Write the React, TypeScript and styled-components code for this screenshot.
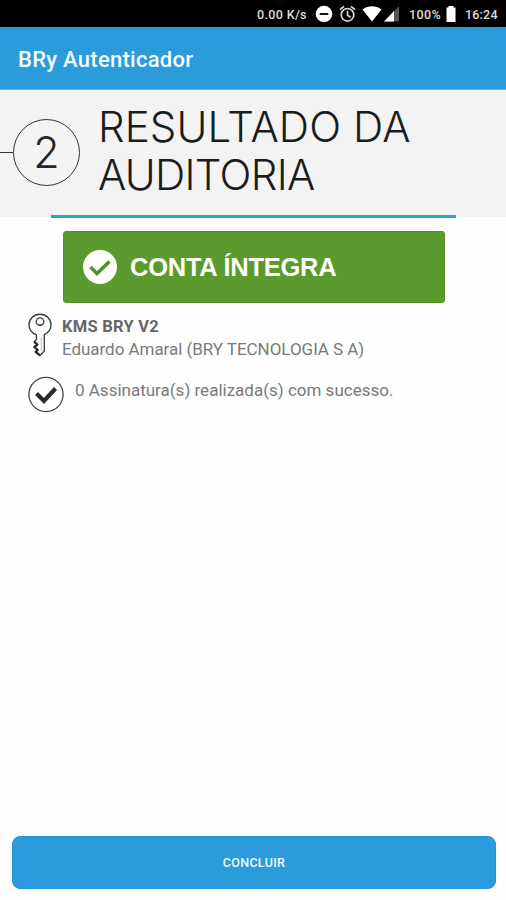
import React from "react";
import styled, { createGlobalStyle } from "styled-components";

const GlobalStyle = createGlobalStyle`
  * { box-sizing: border-box; }
  body { margin: 0; background: #fefefe; font-family: Roboto, "Liberation Sans", sans-serif; }
`;

const Screen = styled.div`
  width: 506px;
  height: 900px;
  display: flex;
  flex-direction: column;
  overflow: hidden;
`;

const StatusBar = styled.header`
  height: 27px;
  flex: none;
  display: flex;
  align-items: center;
  padding: 1px 0 0 257px;
  background: #000;
  color: #dedede;
`;

const StatusText = styled.span<{ $width: number; $spacing?: number }>`
  width: ${(p) => p.$width}px;
  font-size: 12.5px;
  line-height: 15px;
  font-weight: 500;
  letter-spacing: ${(p) => p.$spacing ?? 0}px;
  white-space: nowrap;
`;

const StatusIcons = styled.svg`
  display: block;
  flex: none;
`;

const AppBar = styled.div`
  height: 63px;
  flex: none;
  display: flex;
  align-items: center;
  padding: 2px 0 0 18px;
  background: #2b9bdb;
  border-bottom: 1px solid #76aecb;
`;

const AppTitle = styled.h1`
  margin: 0;
  color: #f2fafd;
  font-size: 22px;
  font-weight: 500;
  letter-spacing: 0.27px;
`;

const StepBanner = styled.section`
  height: 127px;
  flex: none;
  display: flex;
  background: #f3f3f3;
`;

const StepMarker = styled.div`
  width: 98px;
  height: 66px;
  margin-top: 29px;
  display: flex;
  align-items: center;
`;

const StepLine = styled.div`
  width: 13px;
  height: 1px;
  background: #333;
`;

const StepCircle = styled.div`
  width: 67px;
  height: 67px;
  border: 1px solid #333;
  border-radius: 50%;
  text-align: center;
  color: #262626;
  font: 300 43px/65px Inter, sans-serif;
`;

const StepTitle = styled.h2`
  margin: 13px 0 0;
  color: #1c1c1c;
  font: 300 42px/48px Inter, "Liberation Sans", sans-serif;
  white-space: nowrap;
`;

const TitleLine = styled.span<{ $spacing: number }>`
  display: block;
  letter-spacing: ${(p) => p.$spacing}px;
`;

const Divider = styled.div`
  width: 405px;
  height: 3px;
  flex: none;
  margin: -2px 0 0 51px;
  background: #1fa9c8;
`;

const ResultBadge = styled.div`
  width: 382px;
  height: 72px;
  flex: none;
  margin: 13px 0 0 63px;
  padding-left: 19px;
  display: flex;
  align-items: center;
  gap: 13px;
  border: 1px solid #539022;
  border-radius: 3px;
  background: #5a9a2e;
  color: #fdfff9;
  font: bold 25.5px/30px "Liberation Sans", Arial, sans-serif;
  letter-spacing: -0.25px;
`;

const Details = styled.section`
  flex: 1;
  padding: 10px 0 0 28px;
`;

const DetailRow = styled.div<{ $gap: number; $top?: number }>`
  display: flex;
  gap: ${(p) => p.$gap}px;
  margin-top: ${(p) => p.$top ?? 0}px;
`;

const DetailText = styled.p<{ $bold?: boolean; $spacing?: number }>`
  margin: 0;
  font-size: ${(p) => (p.$bold ? 16.5 : 17)}px;
  line-height: 23px;
  font-weight: ${(p) => (p.$bold ? 700 : 400)};
  letter-spacing: ${(p) => p.$spacing ?? 0}px;
  color: ${(p) => (p.$bold ? "#666" : "#7a7a7a")};
  white-space: nowrap;
`;

const DetailLines = styled.div<{ $top: number }>`
  padding-top: ${(p) => p.$top}px;
`;

const FinishButton = styled.button`
  width: 484px;
  height: 53px;
  flex: none;
  margin: 0 0 11px 12px;
  padding: 1px 0 0;
  border: 1px solid #2394d4;
  border-radius: 8px;
  background: #2b9bdb;
  color: #eefaff;
  font: 500 12.5px/16px Roboto, sans-serif;
  letter-spacing: 0.3px;
`;

const BadgeCheck = () => (
  <svg width="34" height="36" viewBox="0 0 34 36">
    <circle cx="17" cy="18" r="17" fill="#fdfff9" />
    <path d="M7.500 18l6.500 6.500L26.500 12.500" fill="none" stroke="#528f29" strokeWidth="3.400" />
  </svg>
);

const KeyIcon = () => (
  <svg width="24" height="44" viewBox="0 0 24 44" fill="none" stroke="#3f3f3f" strokeWidth="1.4" strokeLinejoin="round">
    <path d="M8.3 21.6C3.8 20 1 16.300 1 12 1 5.800 6 1.300 12 1.300S23 5.800 23 12c0 4.300-2.500 7.700-6.700 9.600V38L12 42.500 7.500 38.800l2.200-1.800-3.500-3 3.300-2.600-3.300-2.900 2.300-2.200z" />
    <path d="M6.200 29l3.300 2.600-3.300 2.500 3.600 3-2.200 1.800L12 42.400" stroke="#222" strokeWidth="2" />
    <circle cx="12" cy="8.600" r="3.700" />
    <path d="M13.200 24v14" stroke="#aaa" strokeWidth="0.800" />
  </svg>
);

const CheckIcon = () => (
  <svg width="36" height="37" viewBox="0 0 36 37" fill="none">
    <circle cx="18" cy="18.500" r="17.100" stroke="#444" strokeWidth="1.300" />
    <path d="M8.500 17.500l7.500 7.500L27.500 12.500" stroke="#2b2b2b" strokeWidth="4.200" />
  </svg>
);

const StatusSymbols = () => (
  <StatusIcons width="88" height="20" viewBox="0 0 88 20">
    <circle cx="10" cy="10" r="8.300" fill="#fff" />
    <path d="M5.700 10h8.600" stroke="#111" strokeWidth="2" />
    <g fill="none" stroke="#d6d6d6" strokeWidth="1.700">
      <circle cx="33.500" cy="10.800" r="6.300" />
      <path d="M33.500 6.800v4.400l3 2M26 5.700l4-3.400M41 5.700l-4-3.400" />
    </g>
    <path d="M48.500 5.500c5.500-4.300 13.500-4.300 19 0L58 17.500z" fill="#fff" />
    <path d="M85 2.200v15.300H70z" fill="#555" />
    <path d="M80 7v10.500H70z" fill="#fff" />
  </StatusIcons>
);

const BatteryIcon = () => (
  <StatusIcons width="24" height="18" viewBox="0 0 24 18">
    <path d="M5.500 2.500h2V1h5v1.500h2V17h-9z" fill="#fff" />
  </StatusIcons>
);

export default function App() {
  return (
    <Screen>
      <GlobalStyle />
      <StatusBar>
        <StatusText $width={57} $spacing={0.35}>0.00 K/s</StatusText>
        <StatusSymbols />
        <StatusText $width={7} />
        <StatusText $width={32} $spacing={0.4}>100%</StatusText>
        <BatteryIcon />
        <StatusText $width={34} $spacing={0.2}>16:24</StatusText>
      </StatusBar>
      <AppBar>
        <AppTitle>BRy Autenticador</AppTitle>
      </AppBar>
      <StepBanner>
        <StepMarker>
          <StepLine />
          <StepCircle>2</StepCircle>
        </StepMarker>
        <StepTitle>
          <TitleLine $spacing={0.1}>RESULTADO DA</TitleLine>
          <TitleLine $spacing={-0.7}>AUDITORIA</TitleLine>
        </StepTitle>
      </StepBanner>
      <Divider />
      <ResultBadge>
        <BadgeCheck />
        <span>CONTA ÍNTEGRA</span>
      </ResultBadge>
      <Details>
        <DetailRow $gap={10}>
          <KeyIcon />
          <DetailLines $top={2}>
            <DetailText $bold $spacing={0.25}>KMS BRY V2</DetailText>
            <DetailText $spacing={-0.04}>Eduardo Amaral (BRY TECNOLOGIA S A)</DetailText>
          </DetailLines>
        </DetailRow>
        <DetailRow $gap={11} $top={15}>
          <CheckIcon />
          <DetailLines $top={3}>
            <DetailText>0 Assinatura(s) realizada(s) com sucesso.</DetailText>
          </DetailLines>
        </DetailRow>
      </Details>
      <FinishButton>CONCLUIR</FinishButton>
    </Screen>
  );
}
